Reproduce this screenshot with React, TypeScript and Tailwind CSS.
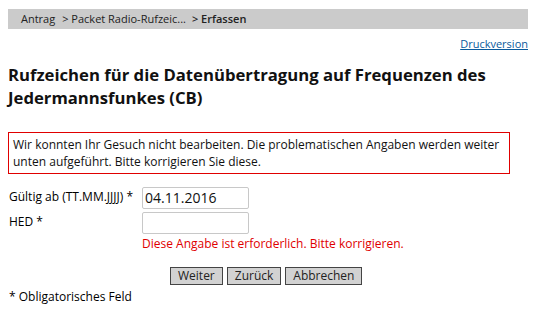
export default function App() {
  return (
    <div className="min-h-[309px] w-[536px] bg-white px-2 pt-[9px] font-['Open_Sans',sans-serif] text-[#000]">
      <div className="flex h-[20px] items-center bg-[#cbcbcb] pl-[13px] text-[11px] text-[#222]">
        <span>Antrag</span>
        <span className="ml-[7px]">&gt; Packet Radio-Rufzeic...</span>
        <span className="ml-[6px] font-semibold">&gt; Erfassen</span>
      </div>
      <div className="mt-[7px] flex justify-end">
        <a href="#" className="text-[11px] text-[#0a5a9c] underline">
          Druckversion
        </a>
      </div>
      <h1 className="mt-[10px] text-[16.7px] font-bold leading-[23px] text-[#111]">
        Rufzeichen für die Datenübertragung auf Frequenzen des Jedermannsfunkes (CB)
      </h1>
      <div className="mt-[23px] w-[502px] border border-[#e00000] px-[4px] py-[3px] text-[12px] leading-[17px] text-[#111]">
        Wir konnten Ihr Gesuch nicht bearbeiten. Die problematischen Angaben werden weiter unten aufgeführt. Bitte korrigieren Sie diese.
      </div>
      <div className="mt-[13px] grid grid-cols-[134px_auto] gap-y-[3px] text-[12px]">
        <label className="pl-px pt-[1px]">Gültig ab (TT.MM.JJJJ) *</label>
        <input
          defaultValue="04.11.2016"
          className="h-[22px] w-[107px] rounded-[2px] border border-[#c8c8c8] px-[2px] text-[14px] text-[#111] outline-none"
        />
        <label className="pl-px pt-[1px]">HED *</label>
        <div>
          <input className="h-[22px] w-[107px] rounded-[2px] border border-[#c8c8c8] px-[2px] text-[14px] outline-none" />
          <div className="mt-[1px] text-[#e00000]">Diese Angabe ist erforderlich. Bitte korrigieren.</div>
        </div>
      </div>
      <div className="mt-[14px] flex gap-[4px] pl-[162px] text-[12px] text-[#222]">
        <button className="h-[18px] border border-[#444] bg-[#d2d2d2] px-[7px] leading-none">Weiter</button>
        <button className="h-[18px] border border-[#444] bg-[#d2d2d2] px-[7px] leading-none">Zurück</button>
        <button className="h-[18px] border border-[#444] bg-[#d2d2d2] px-[7px] leading-none">Abbrechen</button>
      </div>
      <div className="mt-[3px] pl-px text-[12px]">* Obligatorisches Feld</div>
    </div>
  );
}
